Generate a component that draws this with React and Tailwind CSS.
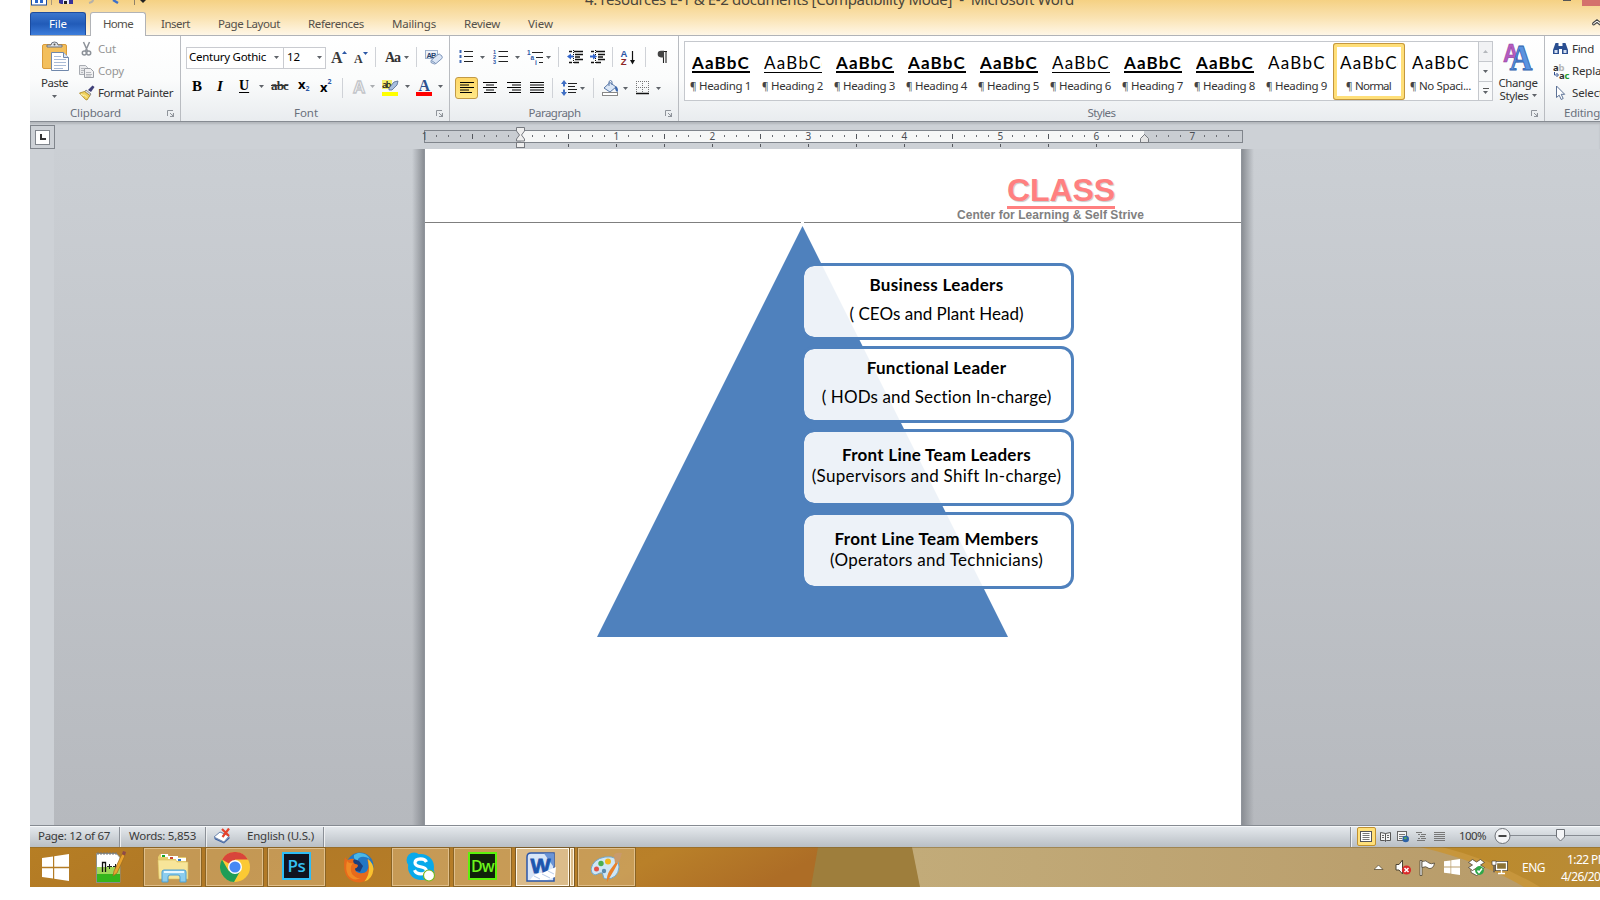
import React, { useLayoutEffect, useRef } from "react";

/* Text set to a fixed measure: tracking is computed from the natural width. */
function T({ w, className = "", children }) {
  const ref = useRef(null);
  useLayoutEffect(() => {
    const el = ref.current;
    el.style.letterSpacing = "0px";
    const n = el.textContent.length;
    const natural = el.getBoundingClientRect().width;
    if (w) el.style.letterSpacing = (w - natural) / n + "px";
  }, [w, children]);
  return (
    <span ref={ref} className={"inline-block whitespace-pre shrink-0 " + className}>
      {children}
    </span>
  );
}

const Arrow = ({ className = "" }) => (
  <svg className={"shrink-0 " + className} width="5" height="3" viewBox="0 0 5 3">
    <path d="M0 0H5L2.5 3Z" fill="#5f6369" />
  </svg>
);

const Sep = () => <span className="block h-5 w-px bg-[#cfd2d7]" />;

const Svg = ({ w = 16, h = 16, children, className = "" }) => (
  <svg className={"block shrink-0 " + className} width={w} height={h} viewBox={`0 0 ${w} ${h}`}>
    {children}
  </svg>
);

const Launcher = () => (
  <Svg w={8} h={8}>
    <path d="M.5 6V.5H6" fill="none" stroke="#8f949b" />
    <path d="M3 3l3 3" stroke="#8f949b" />
    <path d="M7 3v4H3V6h2.5L6 3z" fill="#8f949b" />
  </Svg>
);

function Group({ label, lw, className, children, launcher = true, labelClass = "justify-center pr-[19px]" }) {
  return (
    <section className={"flex h-[85px] shrink-0 flex-col border-r border-[#b9bcc1] " + className}>
      <div className="h-[69px]">{children}</div>
      <div className="relative flex h-4 items-center">
        <div className={"-mt-px flex flex-1 text-[11.5px] leading-4 text-[#6a707c] " + labelClass}>
          <T w={lw}>{label}</T>
        </div>
        {launcher && (
          <div className="absolute right-[5px] top-[5px]">
            <Launcher />
          </div>
        )}
      </div>
    </section>
  );
}

/* ---------- top of the window ---------- */

function TitleBar() {
  return (
    <div className="relative flex h-3 overflow-hidden">
      <div className="flex h-[6px] items-start overflow-hidden">
        <Svg w={17} h={6} className="ml-px">
          <rect x=".5" y="-8" width="15" height="13" fill="#fff" stroke="#1f4da0" />
          <path d="M4 0h3v3H4zM9 0h3v3H9z" fill="#2a66c8" />
        </Svg>
        <span className="ml-[3px] h-[5px] w-px bg-[#a9987a]" />
        <Svg w={14} h={5} className="ml-[7px]">
          <path d="M0 0h14v4H2L0 3z" fill="#36339b" />
          <path d="M4 0h6v4H4z" fill="#e8e8f5" />
          <path d="M5 1h3v3H5z" fill="#222" />
        </Svg>
        <Svg w={8} h={5} className="ml-[14px]">
          <path d="M6 0Q6 2 2 3" stroke="#b6b1a8" strokeWidth="2" fill="none" />
        </Svg>
        <Svg w={8} h={5} className="ml-[17px]">
          <path d="M1 0l5 3" stroke="#3d6fc9" strokeWidth="2.4" fill="none" />
        </Svg>
        <span className="ml-[14px] h-[5px] w-px bg-[#8f8168]" />
        <Svg w={6} h={3} className="ml-[5px]">
          <path d="M0 0h6L3 3z" fill="#222" />
        </Svg>
      </div>
      <div className="absolute left-[555px] top-[-11px] text-[15px] leading-5 text-[#4a453b]">
        <T w={489}>{"4. resources E-1 & E-2 documents [Compatibility Mode]  -  Microsoft Word"}</T>
      </div>
      <span className="absolute left-[1533px] top-0 h-px w-2 bg-[#555]" />
      <span className="absolute left-[1552px] top-0 h-[6px] w-[18px] bg-[#d4716c]" />
    </div>
  );
}

const TABS = [
  ["Insert", 29, "pl-[15px] w-[72px]"],
  ["Page Layout", 62, "w-[90px]"],
  ["References", 56, "w-[84px]"],
  ["Mailings", 44, "w-[72px]"],
  ["Review", 36, "w-[64px]"],
  ["View", 25, "w-[50px]"],
];

function Tabs() {
  return (
    <nav className="flex h-6 items-end border-b border-[#b1b3b7] text-[11.5px] leading-6 text-[#54504a]">
      <div className="flex h-[23px] w-14 justify-center rounded-t-[3px] border border-b-0 border-[#1d4c9f] bg-gradient-to-b from-[#3b76cd] via-[#215bb8] to-[#3d7ddb] leading-[22px] text-white">
        <T w={18}>File</T>
      </div>
      <div className="relative -mb-px ml-1 flex h-6 w-14 justify-center rounded-t-[3px] border border-b-0 border-[#b1b3b7] bg-white leading-[22px]">
        <T w={30}>Home</T>
      </div>
      {TABS.map(([t, w, c]) => (
        <div key={t} className={"h-6 shrink-0 leading-[25px] " + c}>
          <T w={w}>{t}</T>
        </div>
      ))}
      <div className="mb-[7px] ml-auto">
        <Svg w={8} h={9}>
          <path d="M.8 4L5 .8 9.200 4M.8 4q-.5 2 1 2L5 3.500 8 6" fill="#fff" stroke="#444" strokeWidth="1.100" />
        </Svg>
      </div>
    </nav>
  );
}

/* ---------- clipboard ---------- */

function Clipboard() {
  return (
    <Group label="Clipboard" lw={51} className="w-[151px]">
      <div className="flex">
        <div className="flex w-[49px] flex-col items-center pt-[5px] text-[11.5px] leading-4 text-[#333]">
          <Svg w={28} h={31} className="ml-[2px]">
            <rect x=".5" y="3.500" width="24" height="24" rx="1.500" fill="#f3bf5c" stroke="#d99b3c" />
            <path d="M5 6V4h4q0-3 3.500-3t3.500 3h4v2z" fill="#dfe3e8" stroke="#6b7280" />
            <circle cx="12.500" cy="3.500" r="1" fill="#555" />
            <path d="M9.500 11.500h12l5 5v13h-17z" fill="#fff" stroke="#7088ab" />
            <path d="M21.500 11.500v5h5" fill="#dce6f4" stroke="#7088ab" />
            <path d="M12 15.500h7M12 18.500h12M12 21.500h12M12 24.500h12M12 27.500h9" stroke="#a9bbd6" />
          </Svg>
          <T w={27} className="mt-[3px]">Paste</T>
          <Arrow className="mt-1" />
        </div>
        <div className="pt-[2px] text-[11.5px] leading-[22px] text-[#969696]">
          <div className="flex h-[22px] items-center">
            <Svg w={19}>
              <path d="M4.500 1l4 9M10.500 1l-4 9" stroke="#8d9299" strokeWidth="1.500" fill="none" />
              <circle cx="5.300" cy="12" r="2" fill="none" stroke="#8d9299" strokeWidth="1.500" />
              <circle cx="9.700" cy="12" r="2" fill="none" stroke="#8d9299" strokeWidth="1.500" />
            </Svg>
            <T w={18}>Cut</T>
          </div>
          <div className="flex h-[22px] items-center">
            <Svg w={19}>
              <path d="M.5 2.500h6l2 2v7h-8z" fill="#e9eaec" stroke="#a8acb2" />
              <path d="M5.500 5.500h6l3 3v6h-9z" fill="#f1f1f2" stroke="#9a9ea5" />
              <path d="M2 5.500h3M2 7.500h3M2 9.500h2M7 9.500h5M7 11.500h6M7 13h5" stroke="#b5b8bd" />
            </Svg>
            <T w={26}>Copy</T>
          </div>
          <div className="flex h-[22px] items-center text-[#333]">
            <Svg w={19}>
              <path d="M9 5l4.500-4.500 2 1.500L12 7z" fill="#3f3f78" />
              <path d="M7 5l5 4-1.500 2L5.500 7z" fill="#d9dce4" stroke="#666" strokeWidth=".7" />
              <path d="M5.500 6.500L.5 8l6 6.500 1.500.5 3-4.500z" fill="#f0d25d" stroke="#a98722" strokeWidth=".8" />
              <path d="M2 9l3 2M5 9.500l3 3" stroke="#fff6c0" />
            </Svg>
            <T w={75}>Format Painter</T>
          </div>
        </div>
      </div>
    </Group>
  );
}

/* ---------- font ---------- */

function FontGroup() {
  return (
    <Group label="Font" lw={24} className="w-[269px]" labelClass="justify-center pr-[18px]">
      <div className="grid h-[42px] grid-cols-[140px_5px_23px_21px_10px_19px_12px_9px_20px] items-center pl-[5px]">
        <div className="mt-[1px] flex h-[22px] items-center border border-[#c9cbd0] bg-white text-[11.5px] leading-5 text-black">
          <div className="flex h-full w-[97px] items-center border-r border-[#c9cbd0] pl-[2px]">
            <T w={77} className="-mt-px">Century Gothic</T>
            <Arrow className="ml-2" />
          </div>
          <T w={13} className="-mt-px ml-[3px]">12</T>
          <Arrow className="ml-[17px]" />
        </div>
        <span />
        <div className="flex items-end pt-[2px] font-[Liberation_Serif] text-[16px] font-bold leading-5 text-[#3a3a3a]">
          A
          <Svg w={5} h={3} className="mb-[14px] -ml-px"><path d="M0 3h5L2.500 0z" fill="#2b57a5" /></Svg>
        </div>
        <div className="flex items-end pt-[4px] font-[Liberation_Serif] text-[12px] font-bold leading-[17px] text-[#3a3a3a]">
          A
          <Svg w={5} h={3} className="mb-[13px]"><path d="M0 0h5L2.500 3z" fill="#2b57a5" /></Svg>
        </div>
        <Sep />
        <div className="pt-[2px] font-[Liberation_Serif] text-[14px] font-bold leading-5 text-[#333]"><T w={15}>Aa</T></div>
        <Arrow />
        <Sep />
        <Svg w={18} h={18}>
          <rect x=".5" y="2.500" width="12" height="8" fill="#eef2f8" stroke="#9db0cc" />
          <text x="1.500" y="9.500" fontSize="7.500" fontFamily="Liberation Sans" fontWeight="700" fill="#27446f" textLength="10">AB</text>
          <path d="M6 12.500l7-6q1.500-1 2.800.5l1 1q1 1.500 0 2.600L11 15.500q-1.500 1-2.800 0L6 14.500z" fill="#dbe6f6" stroke="#7b93b8" />
          <path d="M6.500 12.500l4 2.800" stroke="#7b93b8" />
        </Svg>
      </div>
      <div className="-mt-[3px] grid h-[26px] grid-cols-[23px_24px_20px_12px_27px_22px_22px_10px_18px_12px_23px_11px_19px_8px] items-center pl-[11px] text-black">
        <b className="-mt-[4px] font-[Liberation_Serif] text-[15px] font-black leading-5">B</b>
        <i className="-mt-[4px] pl-[2px] font-[Liberation_Serif] text-[15px] font-bold leading-5">I</i>
        <span className="-mt-[4px] font-[Liberation_Serif] text-[14px] font-bold leading-5 underline underline-offset-2">U</span>
        <Arrow className="-mt-[3px]" />
        <span className="-mt-[4px] font-[Liberation_Serif] text-[13px] font-bold leading-5 text-[#333]"><T w={17} className="line-through">abc</T></span>
        <span className="-mt-[3px] flex text-[13px] font-bold leading-5">x<span className="pt-[5px] text-[7px] leading-5 text-[#2b57a5]">2</span></span>
        <span className="-mt-[3px] flex text-[13px] font-bold leading-5">x<span className="-mt-[5px] text-[7px] leading-5 text-[#2b57a5]">2</span></span>
        <Sep />
        <Svg w={18} h={18} className="-mt-[2px]">
          <text x="1" y="15" fontSize="17" fontFamily="Liberation Sans" fontWeight="700" fill="#fff" stroke="#c3c5c9" strokeWidth="1.300">A</text>
        </Svg>
        <Arrow className="-mt-[3px] opacity-50" />
        <Svg w={17} h={16}>
          <rect x="0" y="0" width="10" height="9" fill="#f4f06a" />
          <text x="0" y="7.500" fontSize="9" fontFamily="Noto Sans" fontWeight="600" fill="#222" textLength="9.500">ab</text>
          <path d="M7 8l5-6 4-1-1 4-5 5-3 0z" fill="#a9bfdf" stroke="#50698f" strokeWidth=".8" />
          <rect x="0" y="12" width="16" height="4" fill="#ffff00" />
        </Svg>
        <Arrow className="-mt-[3px]" />
        <Svg w={17} h={18}>
          <text x="2.500" y="12" fontSize="16" fontFamily="Liberation Serif" fontWeight="700" fill="#2f528f">A</text>
          <rect x="0" y="13" width="16" height="4" fill="#ff0000" />
        </Svg>
        <Arrow className="-mt-[3px] ml-[3px]" />
      </div>
    </Group>
  );
}

/* ---------- paragraph ---------- */

const Lines = ({ d, className }) => (
  <Svg w={14} h={12} className={className}>
    <path d={d} stroke="#000" strokeWidth="1" fill="none" />
  </Svg>
);

function ParagraphGroup() {
  return (
    <Group label="Paragraph" lw={52} className="w-[229px]">
      <div className="grid h-[42px] grid-cols-[21px_13px_22px_12px_19px_12px_9px_23px_22px_8px_25px_12px_12px] items-center pl-[9px]">
        <Svg w={14} h={14}>
          <path d="M5 1.500h9M5 6.500h9M5 11.500h9" stroke="#222" />
          <path d="M.5 0h2v3h-2zM.5 5h2v3h-2zM.5 10h2v3h-2z" fill="#3f68b5" />
        </Svg>
        <Arrow />
        <Svg w={16} h={14}>
          <path d="M5.500 1.500H15M5.500 6.500H15M5.500 11.500H15" stroke="#222" />
          <g fontSize="5.500" fontFamily="Liberation Sans" fontWeight="700" fill="#2b57a5">
            <text x="0" y="4">1</text><text x="0" y="9">2</text><text x="0" y="14">3</text>
          </g>
        </Svg>
        <Arrow />
        <Svg w={17} h={15}>
          <path d="M5 2.500h11M9 7.500h7M12 12.500h4" stroke="#222" />
          <g fontSize="6.500" fontFamily="Liberation Sans" fontWeight="700" fill="#2b57a5">
            <text x="0" y="4.500">1</text><text x="3.500" y="9.500">a</text><text x="8" y="15">i</text>
          </g>
        </Svg>
        <Arrow />
        <Sep />
        <Svg w={16} h={14}>
          <path d="M2 1.500h3M7 1.500h9M8 4.500h8M8 7h5M8 9.500h8M2 12.500h3M7 12.500h5" stroke="#111" strokeWidth="1.400" />
          <path d="M6.500 0v14" stroke="#111" strokeDasharray="1 1" />
          <path d="M0 6.500L4 3.500v2h2.500v2H4v2z" fill="#3366cc" />
        </Svg>
        <Svg w={16} h={14}>
          <path d="M1 1.500h3M6 1.500h9M8 4.500h7M8 7h5M8 9.500h7M1 12.500h3M6 12.500h5" stroke="#111" strokeWidth="1.400" />
          <path d="M5.500 0v14" stroke="#111" strokeDasharray="1 1" />
          <path d="M7 6.500L3 3.500v2H0v2h3v2z" fill="#3366cc" />
        </Svg>
        <Sep />
        <Svg w={16} h={17}>
          <text x="0.500" y="7.500" fontSize="9.500" fontFamily="Liberation Sans" fontWeight="700" fill="#2b57a5">A</text>
          <text x="0.800" y="16" fontSize="9.500" fontFamily="Liberation Sans" fontWeight="700" fill="#8c2626">Z</text>
          <path d="M12.500 2v10" stroke="#111" strokeWidth="1.200" />
          <path d="M10 11h5l-2.500 4.500z" fill="#111" />
        </Svg>
        <Sep />
        <Svg w={11} h={14}>
          <path d="M10 1.500H4.500M6.500 1v12M9 1v12" stroke="#222" strokeWidth="1.100" />
          <path d="M7 .8H4a3.300 3.300 0 000 6.600h3z" fill="#444" />
        </Svg>
      </div>
      <div className="-mt-[3px] grid h-[26px] grid-cols-[28px_24px_23px_22px_9px_20px_12px_9px_21px_13px_20px_8px] items-center pl-[5px]">
        <span className="flex h-[22px] w-[23px] items-center justify-center rounded-[3px] border border-[#c29a45] bg-gradient-to-b from-[#ffd765] to-[#ffe888]">
          <Lines d="M0 .5h14M0 3h9M0 5.500h14M0 8h9M0 10.500h12" />
        </span>
        <Lines d="M0 .5h14M3 3h8M0 5.500h14M3 8h8M1 10.500h12" />
        <Lines d="M0 .5h14M5 3h9M0 5.500h14M5 8h9M2 10.500h12" />
        <Lines d="M0 .5h14M0 3h14M0 5.500h14M0 8h14M0 10.500h14" />
        <Sep />
        <Svg w={16} h={16}>
          <path d="M7 3.500h9M7 6.500h7M7 9.500h9M7 12.500h8" stroke="#222" />
          <path d="M3 0l3 4H4v2.500H2V4H0zM3 16l3-4H4V9.500H2V12H0z" fill="#3f6fc4" />
        </Svg>
        <Arrow className="-ml-px" />
        <Sep />
        <Svg w={17} h={16}>
          <path d="M2 8l6-5.500 6 4.500-6 5z" fill="#dce8f7" stroke="#5877a6" />
          <path d="M7 6V1.500q1.500-2 3 0V5" fill="none" stroke="#5877a6" />
          <path d="M14 6q3 3 1.500 6-2-.5-2.500-4z" fill="#3a66ae" />
          <rect x=".5" y="12.500" width="15" height="3" fill="#fff" stroke="#888" />
        </Svg>
        <Arrow />
        <Svg w={14} h={14}>
          <path d="M0 .5h13M0 6.500h13M.5 0v12M6.500 0v12M12.500 0v12" stroke="#777" strokeDasharray="1 1" />
          <path d="M0 12.500h13" stroke="#111" strokeWidth="1.500" />
        </Svg>
        <Arrow />
      </div>
    </Group>
  );
}

/* ---------- styles ---------- */

const STYLES = [
  ["Heading 1", "AaBbCc", "b"],
  ["Heading 2", "AaBbCc", "u"],
  ["Heading 3", "AaBbCc", "b"],
  ["Heading 4", "AaBbCc", "b"],
  ["Heading 5", "AaBbC", "b"],
  ["Heading 6", "AaBbCc", "u"],
  ["Heading 7", "AaBbCc", "b"],
  ["Heading 8", "AaBbCc", "b"],
  ["Heading 9", "AaBbCc", "n"],
  ["Normal", "AaBbCc", "n"],
  ["No Spaci...", "AaBbCc", "n"],
];
const PREVIEW = {
  b: "font-bold border-b-2 border-black",
  u: "font-normal border-b border-black h-[17px] mb-px",
  n: "font-normal",
};

function StyleTile({ item }) {
  const [name, sample, kind] = item;
  const on = name === "Normal";
  const w = on ? 36 : 52;
  return (
    <div
      className={
        "flex h-[57px] w-[72px] shrink-0 flex-col items-center rounded-[3px] " +
        (on ? "bg-white shadow-[inset_0_0_0_1px_#c4973f,inset_0_0_0_4px_#ffdf78]" : "")
      }
    >
      <div className="mt-3 h-[18px]">
        <div className={"h-[18px] w-[58px] overflow-hidden font-[Lato] text-[17px] leading-[15px] text-black " + PREVIEW[kind]}>
          <T w={sample.length === 6 ? 67 : 58}>{sample}</T>
        </div>
      </div>
      <div className="mt-[5px] flex h-4 text-[11.5px] leading-4 text-[#333]">
        <span className="-ml-px w-[9px] text-[10px] text-[#444]">¶</span>
        <T w={w}>{name}</T>
      </div>
    </div>
  );
}

function StylesGroup() {
  return (
    <Group label="Styles" lw={28} className="w-[866px]" labelClass="justify-center pr-[20px]">
      <div className="flex pl-[5px] pt-[5px]">
        <div className="flex h-[60px] w-[809px] border border-[#c5c8cd] bg-white">
          <div className="flex w-[793px] pt-[1px]">
            {STYLES.map((s) => (
              <StyleTile key={s[0]} item={s} />
            ))}
          </div>
          <div className="flex w-[14px] flex-col border-l border-[#c5c8cd]">
            <span className="flex h-[19px] items-center justify-center bg-[#f1f2f4]">
              <Svg w={5} h={3}><path d="M0 3h5L2.500 0z" fill="#b4b7bc" /></Svg>
            </span>
            <span className="flex h-5 items-center justify-center border-t border-[#c5c8cd] bg-[#f8f9fa]"><Arrow /></span>
            <span className="flex h-[19px] flex-col items-center justify-center gap-[2px] border-t border-[#c5c8cd] bg-[#f8f9fa]">
              <span className="h-px w-[6px] bg-[#555]" />
              <Arrow />
            </span>
          </div>
        </div>
        <div className="flex w-[50px] flex-col items-center pt-[1px] text-[11.5px] text-[#333]">
          <Svg w={32} h={29}>
            <g fontFamily="Liberation Sans" fontWeight="700">
              <text x="1" y="20" fontSize="26" textLength="16" lengthAdjust="spacingAndGlyphs" fill="#b65bc0" stroke="#8c3f9c" strokeWidth=".6">A</text>
            </g>
            <g fontFamily="Liberation Serif" fontWeight="700">
              <text x="7.500" y="28" fontSize="36" textLength="23" lengthAdjust="spacingAndGlyphs" fill="#5a93e0" stroke="#2f61ad" strokeWidth=".8">A</text>
            </g>
          </Svg>
          <T w={39} className="mt-[5px] leading-[13px]">Change</T>
          <div className="flex items-center leading-[13px]">
            <T w={29}>Styles</T>
            <Arrow className="ml-[3px]" />
          </div>
        </div>
      </div>
    </Group>
  );
}

function EditingGroup() {
  return (
    <Group label="Editing" lw={36} className="w-[76px] border-r-0" launcher={false} labelClass="justify-start pl-[19px]">
      <div className="pl-[8px] pt-[2px] text-[11.5px] leading-[22px] text-[#333]">
        <div className="flex h-[22px] items-center">
          <Svg w={19}>
            <path d="M2.500 2h3v3h4V2h3l2.500 7v4H9V8H6v5H0V9z" fill="#2b4f91" />
            <path d="M1.500 9h3v3h-3zM10.500 9h3v3h-3z" fill="#d5e0f2" />
          </Svg>
          <T w={22}>Find</T>
        </div>
        <div className="flex h-[22px] items-center">
          <Svg w={19}>
            <g fontFamily="Noto Sans" fontWeight="700" fontSize="9.500">
              <text x="0" y="7.500" fill="#333">a</text>
              <text x="5.500" y="7.500" fill="#b5b5b5">b</text>
              <text x="6" y="15.500" fill="#333">a</text>
              <text x="11.500" y="15.500" fill="#1f9a2e">c</text>
            </g>
            <path d="M1.500 9v3h3M3.500 10l2 2-2 2" fill="none" stroke="#2f4f8f" />
          </Svg>
          <T w={41}>Replace</T>
        </div>
        <div className="flex h-[22px] items-center">
          <Svg w={19}>
            <path d="M3.500 1v11.500l2.700-2.300 2 4.300 2-1-2-4.200h3.500z" fill="#fff" stroke="#5c7296" />
          </Svg>
          <T w={31}>Select</T>
        </div>
      </div>
    </Group>
  );
}

/* ---------- ruler ---------- */

function Ruler() {
  const marks = [];
  for (let i = -7; i <= 59; i++) {
    const x = 96 + i * 12;
    if (i % 8 === 0) {
      if (i !== 0)
        marks.push(<text key={i} x={x + 0.4} y="14" textAnchor="middle">{i / 8}</text>);
    } else if (i % 4 === 0) marks.push(<path key={i} d={`M${x + 0.5} 8v5`} stroke="#55585e" />);
    else if (i !== 52) marks.push(<path key={i} d={`M${x + 0.5} 9v2`} stroke="#6a6d73" />);
  }
  const under = [];
  for (let i = 1; i <= 12; i++) under.push(<path key={i} d={`M${96.500 + i * 48} 18v3`} stroke="#55585e" />);
  return (
    <svg className="block overflow-visible" width="819" height="23" viewBox="0 0 819 23">
      <rect x=".5" y="4.500" width="818" height="12" fill="#c9cdd2" />
      <rect x="97" y="4.500" width="623" height="12" fill="#f6f7f7" />
      <rect x=".5" y="4.500" width="818" height="12" fill="none" stroke="#80858c" />
      <g fontFamily="Noto Sans" fontSize="10" fill="#4b4e54">
        <text x="0.500" y="14" textAnchor="middle">1</text>
        {marks}
      </g>
      {under}
      <path d="M92.500 1.500h8v3.500l-3 4 3 4v2h-8v-2l3-4-3-4z" fill="#eee" stroke="#777a80" />
      <rect x="92.500" y="16.500" width="8" height="5" fill="#eee" stroke="#777a80" />
      <path d="M716.500 16.500v-4l4-4 4 4v4z" fill="#e4e4e4" stroke="#777a80" />
    </svg>
  );
}

/* ---------- document ---------- */

const LEVELS = [
  { t: "Business Leaders", tw: 134, s: "( CEOs and Plant Head)", sw: 174, c: "pt-[9px] gap-[9px]" },
  { t: "Functional Leader", tw: 140, s: "( HODs and Section In-charge)", sw: 230, c: "pt-[9px] gap-[9px]" },
  { t: "Front Line Team Leaders", tw: 189, s: "(Supervisors and Shift In-charge)", sw: 249, c: "pt-[13px] gap-[1px]" },
  { t: "Front Line Team Members", tw: 204, s: "(Operators and Technicians)", sw: 213, c: "pt-[14px] gap-[1px]" },
];

function Page() {
  return (
    <article className="flex h-full w-[818px] flex-col border-x border-[#8f949b] bg-white">
      <header className="flex h-[74px] flex-col border-b border-[#7f7f7f] pl-[532px] pt-[23px] font-['Liberation_Sans'] font-bold">
        <div className="ml-[50px] h-[37px] w-[108px] border-b-[3px] border-[#ff8080] text-[32px] leading-[37px] text-[#ff8080] [text-shadow:1px_1px_1px_#c8c8c8]">
          <T w={108}>CLASS</T>
        </div>
        <div className="text-[12px] leading-[13px] text-[#808080]"><T w={187}>{"Center for Learning & Self Strive"}</T></div>
      </header>
      <div className="relative h-[420px] pt-[40px]">
        <svg className="absolute left-[172px] top-[-1px]" width="412" height="416" viewBox="0 0 412 416">
          <rect x="204" y="0" width="3" height="1" fill="#fff" />
          <path d="M205.500 4L411 415H0z" fill="#4f81bd" />
        </svg>
        <div className="relative ml-[376px] flex w-[273px] flex-col gap-[6px]">
          {LEVELS.map((l) => (
            <div
              key={l.t}
              className={
                "flex h-[77px] flex-col items-center rounded-[13px] border-[3px] border-[#4f81bd] bg-white/90 bg-clip-padding pr-[2px] font-[Lato] text-[17px] leading-5 text-black " +
                l.c
              }
            >
              <T w={l.tw} className="h-5 font-bold">{l.t}</T>
              <T w={l.sw} className="h-5">{l.s}</T>
            </div>
          ))}
        </div>
      </div>
    </article>
  );
}

/* ---------- status bar ---------- */

const SSep = () => <span className="h-5 w-[2px] border-l border-[#8b9097] bg-[#eef0f2]" />;

function StatusBar() {
  return (
    <div className="flex h-[22px] items-center border-t border-[#868b92] bg-gradient-to-b from-[#e6eaee] to-[#b9bfc5] text-[11.5px] leading-5 text-[#3a3a3a] shadow-[inset_0_1px_0_#f6f8fa]">
      <div className="flex w-[89px] pb-px pl-2"><T w={72}>Page: 12 of 67</T></div>
      <SSep />
      <div className="flex w-[84px] pb-px pl-2"><T w={67}>Words: 5,853</T></div>
      <SSep />
      <div className="flex w-[116px] items-center pb-px pl-[7px]">
        <Svg w={17}>
          <path d="M0 9l6-5 9 4-5 6z" fill="#fff" stroke="#6b84ad" />
          <path d="M0 9.500l10 5 5.500-6v2L10 15.500 1 11.500z" fill="#3c62a5" />
          <path d="M8 1l7 7M15 .5L8.500 9" stroke="#e5432d" strokeWidth="2.200" />
        </Svg>
        <T w={67} className="ml-4">English (U.S.)</T>
      </div>
      <SSep />
      <div className="ml-auto flex items-center">
        <SSep />
        <span className="ml-[5px] flex h-[19px] w-[19px] items-center justify-center rounded-[2px] border border-[#c0902f] bg-[#ffe07a]">
          <Svg w={13} h={11}>
            <rect x=".5" y=".5" width="11" height="10" fill="#fff" stroke="#555" />
            <path d="M2.500 2.500h7M2.500 4.500h7M2.500 6.500h7M2.500 8.500h7" stroke="#777" />
          </Svg>
        </span>
        <Svg w={12} h={12} className="ml-[4px]">
          <path d="M.5 1.500l5 1 5-1v8h-4l-1 1-1-1h-4zM5.500 2.500v8" fill="#f4f4f4" stroke="#555" />
          <path d="M2 4.500h2M2 6.500h2M7 4.500h2M7 6.500h2" stroke="#666" />
        </Svg>
        <Svg w={13} h={12} className="ml-[5px]">
          <rect x=".5" y=".5" width="9" height="9" fill="#f4f4f4" stroke="#666" />
          <path d="M2 3.500h6M2 5.500h6M2 7.500h3" stroke="#777" />
          <circle cx="8.700" cy="8" r="3.300" fill="#2c62a8" />
          <path d="M7 6.500q2-1 3 .5-1 2-3 1z" fill="#54a958" />
        </Svg>
        <Svg w={11} h={11} className="ml-[6px]">
          <path d="M0 1.500h6M2 3.500h2M5 3.500h5M4 5.500h5M2 7.500h2M5 7.500h5M1 9.500h8" stroke="#777" />
        </Svg>
        <Svg w={11} h={11} className="ml-[7px]">
          <path d="M0 1.500h11M0 3.500h11M0 5.500h11M0 7.500h11M0 9.500h11" stroke="#777" />
        </Svg>
        <T w={27} className="ml-[14px] pb-px">100%</T>
        <Svg w={106} h={18} className="ml-[8px] -mt-px">
          <path d="M16 8.500h91" stroke="#868b92" />
          <circle cx="8.500" cy="9" r="7.500" fill="#f3f4f6" stroke="#6e7278" />
          <path d="M4.500 9h8" stroke="#444" strokeWidth="2" />
          <path d="M62.500 2.500h8v7.500l-4 4-4-4z" fill="#f4f5f7" stroke="#6e7278" />
        </Svg>
      </div>
    </div>
  );
}

/* ---------- taskbar ---------- */

function Btn({ children, className = "", plain }) {
  return (
    <div
      className={
        "flex h-10 w-[59px] shrink-0 items-center justify-center " +
        (plain ? "" : "border border-[#8a6425] bg-[#e2c79a]/40 shadow-[inset_0_0_0_1px_#e0bf8b] ") +
        className
      }
    >
      {children}
    </div>
  );
}

const WinLogo = ({ s = 27 }) => (
  <svg width={s} height={s} viewBox="0 0 27 27">
    <path d="M0 4l11-1.600v10.400H0zM12.200 2.200L27 0v12.800H12.200zM0 14.200h11v10.400L0 23zM12.200 14.200H27V27l-14.800-2.200z" fill="#fff" />
  </svg>
);

function Taskbar() {
  return (
    <div className="relative h-10 overflow-hidden">
      <svg className="absolute inset-0" width="1570" height="40" viewBox="0 0 1570 40">
        <defs>
          <linearGradient id="o" x1="0" x2="1" y2=".1">
            <stop offset="0" stopColor="#b67e24" /><stop offset=".25" stopColor="#b07826" />
            <stop offset=".8" stopColor="#b98029" /><stop offset="1" stopColor="#ad6d26" />
          </linearGradient>
          <linearGradient id="g" x1="0" x2="1">
            <stop offset="0" stopColor="#c2ab79" /><stop offset="1" stopColor="#b79a68" />
          </linearGradient>
          <linearGradient id="y" x1="0" x2="1">
            <stop offset="0" stopColor="#bd8a2a" /><stop offset="1" stopColor="#b88b36" />
          </linearGradient>
        </defs>
        <rect width="800" height="40" fill="url(#o)" />
        <path d="M788 0h115l8 40H781z" fill="#9e7e3c" />
        <path d="M882 0h688v40H890z" fill="url(#g)" />
        <path d="M1390 0h180v40h-76Q1450 14 1390 0z" fill="#c7963c" />
        <path d="M1412 0h158v40h-60Q1466 14 1412 0z" fill="url(#y)" />
        <path d="M0 .5h1570" stroke="#7a5f2c" strokeOpacity=".45" />
      </svg>
      <div className="relative flex h-10">
        <div className="flex w-[52px] items-center justify-end pr-[13px]"><WinLogo /></div>
        <div className="flex w-[61px] items-center pl-[14px]">
          <Svg w={30} h={34}>
            <path d="M.5 3.500h20l3.500 4v25H.5z" fill="#fff" stroke="#8a8f8a" />
            <path d="M1 17h23v15H1z" fill="#9fd65a" />
            <path d="M1 24h23v8H1z" fill="#35b51c" />
            <path d="M2 2v3M5 2v3M8 2v3M11 2v3M14 2v3M17 2v3M20 2v3" stroke="#777" />
            <path d="M6.500 22V12.500h3V22" fill="none" stroke="#111" strokeWidth="1.300" />
            <path d="M11 16.500h5M13.500 14v5M17 16.500h5M19.500 14v5" stroke="#222" />
            <path d="M17 26l1-5L26 4l3 1.500L21 23z" fill="#e9a32f" stroke="#9c6a1c" strokeWidth=".7" />
            <path d="M26 4l1-3 3 1-1 3.500z" fill="#8d4a4a" />
          </Svg>
        </div>
        <Btn>
          <Svg w={32} h={32}>
            <path d="M1 6l2-3h8l1 3h17v20H2z" fill="#e7cd6c" />
            <path d="M4 3h7v3H4z" fill="#fff" /><path d="M5 4h3v2H5z" fill="#13a324" />
            <path d="M11 5h10v3H11z" fill="#fff" /><path d="M13 6h3v2h-3z" fill="#c8432f" />
            <path d="M19 7h10v3H19z" fill="#fff" /><path d="M21 8h3v2h-3z" fill="#2e78c9" />
            <path d="M1 9h18l1 2h11v17H2z" fill="#f7e599" stroke="#d9bd5e" strokeWidth=".6" />
            <path d="M5 31V21q0-2 2-2h20q2 0 2 2v10h-6v-5q0-2-2-2h-8q-2 0-2 2v5z" fill="#8ccdee" stroke="#4e9fd0" />
            <path d="M7 21h20" stroke="#e6f7ff" strokeWidth="2" />
          </Svg>
        </Btn>
        <Btn className="ml-[3px]">
          <Svg w={30} h={30}>
            <circle cx="15" cy="15" r="15" fill="#fbc934" />
            <path d="M15 15L2 7.500A15 15 0 0128 7.500H15z" fill="#d8453b" />
            <path d="M2 7.500A15 15 0 0014 30l6.500-11.500L15 15 8.500 18.700z" fill="#1f9d57" />
            <circle cx="15" cy="15" r="7" fill="#fff" /><circle cx="15" cy="15" r="5.600" fill="#4688f4" />
          </Svg>
        </Btn>
        <Btn className="ml-[3px]">
          <span className="mb-[2px] flex h-7 w-[29px] items-center justify-center border-2 border-[#2fbdf5] bg-[#10131f] text-[17px] leading-6 text-[#35c0f2] [font-family:'Open_Sans']"><T w={18} className="font-semibold">Ps</T></span>
        </Btn>
        <Btn plain className="ml-[3px]">
          <Svg w={30} h={31}>
            <circle cx="16" cy="14" r="13.500" fill="#2377c4" />
            <path d="M14 1q8-1 12 6-5-3-9-2t-3 5q-5-3-4-7z" fill="#4bb8e6" />
            <path d="M7 9q4-3 8 0l4 5-3 6-7-2z" fill="#1b3f7c" />
            <path d="M1 5q1 3 3 3 3-2 6-1-2 3 1 5 3 0 3 2-1 2-3 2.500 0 3.500 4 4.500 5 1 8-2 3-5 0-12 5 4 5.500 10Q30 28 16 30.500 2 30 .3 17-.3 10 1 5z" fill="#e66a1b" />
            <path d="M24 7q5 4 5.500 10-1 10-9 12.500 5-7 4.500-14-.5-4-1-8.500z" fill="#f9c22f" />
            <path d="M3 9q2 3 6 2-4 5-1 11 4 5 9 4-8 4-13-3Q1 17 3 9z" fill="#f08a24" />
          </Svg>
        </Btn>
        <Btn className="ml-[3px]">
          <Svg w={30} h={30}>
            <circle cx="15" cy="15" r="13" fill="#08a9ea" />
            <circle cx="8" cy="8" r="7.500" fill="#08a9ea" /><circle cx="21" cy="21" r="7.500" fill="#08a9ea" />
            <path d="M20.500 10Q19 6.800 14.500 6.800 9 7 9 10.800q0 3 5.500 4t5.800 3.500q-.3 3.500-5.500 3.500-4.800 0-6.300-3.700" fill="none" stroke="#fff" strokeWidth="3.200" />
            <circle cx="23" cy="23.500" r="5.500" fill="#fff" stroke="#79b51c" strokeWidth="1.200" />
          </Svg>
        </Btn>
        <Btn className="ml-[3px]">
          <span className="mb-[2px] flex h-7 w-[29px] items-center justify-center border-2 border-[#5df20b] bg-[#10220a] text-[16px] leading-6 text-[#6df41c] [font-family:'Open_Sans']"><T w={23} className="font-semibold">Dw</T></span>
        </Btn>
        <Btn className="ml-[3px] !w-[55px] !border-[#7a5a28] !bg-[#ead6b4]/70 !pr-[4px] !shadow-[inset_0_0_0_1px_#fff8e8]">
          <Svg w={30} h={30}>
            <path d="M1 5q0-4 4-4h23v28H1z" fill="#d7e5f8" stroke="#2c57a8" strokeWidth="1.500" />
            <path d="M18 1.500h10v14z" fill="#6a94d6" />
            <text x="4.500" y="20.500" fontSize="21" fontFamily="Liberation Sans" fontWeight="700" fill="#1c56ae" stroke="#1c56ae" strokeWidth=".8" textLength="20" lengthAdjust="spacingAndGlyphs">W</text>
            <path d="M4 28q5-8 12-7l14-6-1 10-8 3z" fill="#fff" />
            <path d="M8 24l6 3M16 22l8 4M22 19l6 3" stroke="#b9cbe8" />
          </Svg>
        </Btn>
        <span className="h-10 w-[5px] border border-l-0 border-[#7a5a28] bg-[#ead6b4]/70 shadow-[inset_0_0_0_1px_#fff3dc]" />
        <Btn className="ml-[2px]">
          <Svg w={31} h={32}>
            <path d="M14 6q14-2 14 10-1 12-13 12-3 0-3-4 0-3-3-2-2 1-5 2-4-1-4-6Q2 8 14 6z" fill="#cfe6f5" stroke="#6fa6cc" />
            <circle cx="5.500" cy="18" r="2.500" fill="#e25347" /><circle cx="10" cy="12.500" r="2.700" fill="#4bae4f" />
            <circle cx="17" cy="10.500" r="3" fill="#f2b61e" /><circle cx="13" cy="20" r="2.200" fill="#5b8aad" />
            <path d="M16 31q-1-6 3-12l6-8 2 1-5 9z" fill="#e9812a" />
            <path d="M24 12l-1-7q0-4 8-3-1 5-4 10z" fill="#c99a6b" />
          </Svg>
        </Btn>
        <div className="ml-auto flex items-center leading-[17px] text-white">
          <Svg w={10} h={6} className="mr-[-1px]"><path d="M0 5.500h9L4.500 1z" fill="#fff" stroke="#5d5138" strokeWidth=".8" /></Svg>
          <Svg w={17} h={17} className="ml-[12px]">
            <path d="M1 5.500h3L7.500 1v14L4 11H1z" fill="#fff" stroke="#4d4433" />
            <circle cx="11.500" cy="11" r="4.600" fill="#d92a2a" /><path d="M9.500 9l4 4M13.500 9l-4 4" stroke="#fff" strokeWidth="1.500" />
          </Svg>
          <Svg w={17} h={17} className="ml-[7px]">
            <path d="M1 1.500h2v15H1z" fill="#fff" stroke="#4d4433" strokeWidth=".8" />
            <path d="M3 2.500q4-2 7 1.500 2 1.500 5.500 0-1 6-5.500 5.500-3-3-7-1z" fill="#fff" stroke="#4d4433" strokeWidth=".8" />
          </Svg>
          <div className="ml-[8px]"><WinLogo s={16} /></div>
          <Svg w={17} h={17} className="ml-[8px]">
            <path d="M4.500.5l4 2.500 4-2.500 4 3-4 2.500 4 2.500-4 3-4-2.500-4 2.500-4-3L4.500 6l-4-2.500zM3 11v2.500l5.500 3 5-3V11" fill="#fff" stroke="#4d4433" strokeWidth=".8" />
            <circle cx="11.500" cy="11.500" r="4.400" fill="#2fa84a" /><path d="M9.500 11.500l1.500 2 3-4" fill="none" stroke="#fff" strokeWidth="1.500" />
          </Svg>
          <Svg w={17} h={17} className="ml-[6px]">
            <path d="M5.500 3.500h10v7h-10z" fill="none" stroke="#4d4433" strokeWidth="3" />
            <path d="M5.500 3.500h10v7h-10zM10.500 11v3M7 14.500h7" fill="#8c7337" stroke="#fff" strokeWidth="1.300" />
            <path d="M1 2h4v4H3.500v7h-1V6H1z" fill="#fff" stroke="#4d4433" strokeWidth=".7" />
          </Svg>
          <T w={23} className="ml-[14px] text-[12px]">ENG</T>
          <div className="ml-4 flex w-[39px] flex-col items-start pt-px text-[12px]">
            <T w={41} className="ml-[6px]">1:22 PM</T>
            <T w={52}>4/26/2016</T>
          </div>
        </div>
      </div>
    </div>
  );
}

export default function App() {
  return (
    <div className="h-[900px] w-[1600px] overflow-hidden bg-white pl-[30px] [font-family:'Noto_Sans',sans-serif]">
      <div className="flex h-[887px] w-[1570px] flex-col overflow-hidden">
        <div className="h-9 bg-gradient-to-b from-[#f5d183] via-[#fae3b2] to-[#fff8ea]">
          <TitleBar />
          <Tabs />
        </div>
        <div className="flex h-[86px] shrink-0 overflow-hidden border-b border-[#868b92] bg-gradient-to-b from-white via-[#fbfcfc] to-[#e9ecef]">
          <Clipboard />
          <FontGroup />
          <ParagraphGroup />
          <StylesGroup />
          <EditingGroup />
        </div>
        <div className="flex h-[27px] shrink-0 bg-[#cdd1d6] pt-[3px] shadow-[inset_0_2px_2px_#b4b8bd]">
          <div className="flex h-6 w-[25px] items-center justify-center border border-[#80858c]">
            <span className="flex h-[15px] w-[15px] items-center justify-center border border-[#80858c] bg-white">
              <Svg w={6} h={6}><path d="M1 0v5h5" fill="none" stroke="#333" strokeWidth="2" /></Svg>
            </span>
          </div>
          <div className="ml-[369px] pt-px"><Ruler /></div>
        </div>
        <div className="flex h-[676px] shrink-0">
          <div className="w-6 bg-[#cdd1d6]" />
          <main className="flex flex-1 bg-gradient-to-b from-[#cbcfd4] to-[#b6b9be] pl-[358px]">
            <div className="w-3 bg-gradient-to-r from-transparent to-[#8a8e94]" />
            <Page />
            <div className="w-3 bg-gradient-to-r from-[#8a8e94] to-transparent" />
          </main>
        </div>
        <StatusBar />
        <Taskbar />
      </div>
    </div>
  );
}
